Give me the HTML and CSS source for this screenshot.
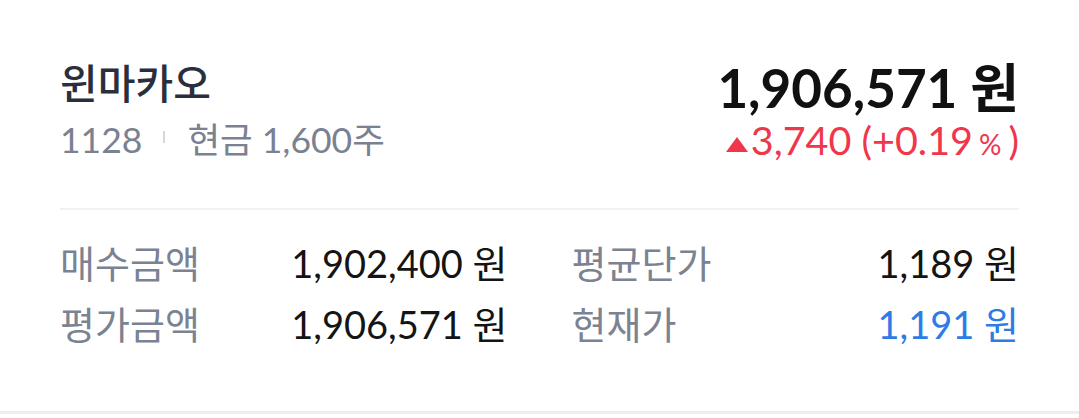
FILE: index.html
```html
<!DOCTYPE html>
<html lang="ko">
<head>
<meta charset="utf-8">
<link rel="stylesheet" href="styles.css">
</head>
<body>
<div class="card">
  <div class="header">
    <div class="info">
      <div class="name">윈마카오</div>
      <div class="sub"><span>1128</span><span class="sep"></span><span>현금 1,600주</span></div>
    </div>
    <div class="quote">
      <div class="price">1,906,571 원</div>
      <div class="change"><span class="tri"></span>3,740 (+0.19<span class="pct">%</span>)</div>
    </div>
  </div>
  <div class="divider"></div>
  <div class="grid">
    <div class="row"><span class="label">매수금액</span><span class="value">1,902,400 원</span></div>
    <div class="row"><span class="label">평균단가</span><span class="value">1,189 원</span></div>
    <div class="row"><span class="label">평가금액</span><span class="value">1,906,571 원</span></div>
    <div class="row"><span class="label">현재가</span><span class="value blue">1,191 원</span></div>
  </div>
</div>
<div class="bottom-line"></div>
</body>
</html>
```
FILE: styles.css
```css
html, body {
  margin: 0;
  padding: 0;
  background: #fff;
}
body {
  font-family: "Lato", "Noto Sans CJK KR", sans-serif;
  width: 1079px;
  height: 418px;
  overflow: hidden;
}
.card {
  padding: 56px 60px 0 60px;
}
.header {
  display: flex;
  justify-content: space-between;
  align-items: flex-start;
}
.name {
  font-size: 41px;
  line-height: 56px;
  font-weight: 500;
  color: #2a2f3e;
}
.sub {
  display: flex;
  align-items: center;
  margin-top: 4px;
  font-size: 35.5px;
  line-height: 48px;
  color: #7a8190;
}
.sep {
  width: 2px;
  height: 12px;
  background: #d5d8dc;
  margin: 0 22px 7px 21px;
}
.quote {
  display: flex;
  flex-direction: column;
  align-items: flex-end;
}
.price {
  font-size: 53px;
  line-height: 64px;
  font-weight: 700;
  color: #111;
}
.change {
  margin-top: 2px;
  font-size: 39.5px;
  line-height: 36px;
  color: #f0364b;
  white-space: nowrap;
}
.tri {
  display: inline-block;
  width: 0;
  height: 0;
  border-left: 11px solid transparent;
  border-right: 11px solid transparent;
  border-bottom: 15px solid #f0364b;
  margin: 0 3px 3px 0;
}
.pct {
  font-size: 28px;
  margin: 0 7px 0 6px;
}
.divider {
  height: 2px;
  background: #f2f2f3;
  margin-top: 44px;
}
.grid {
  display: grid;
  grid-template-columns: 1fr 1fr;
  column-gap: 64px;
  margin-top: 23px;
}
.row {
  display: flex;
  justify-content: space-between;
  align-items: baseline;
  font-size: 38px;
  line-height: 61px;
}
.label {
  color: #7b8291;
}
.value {
  color: #141414;
}
.value.blue {
  color: #2f7be6;
}
.bottom-line {
  margin-top: 56px;
  height: 3px;
  background: #eeeeef;
}
```
